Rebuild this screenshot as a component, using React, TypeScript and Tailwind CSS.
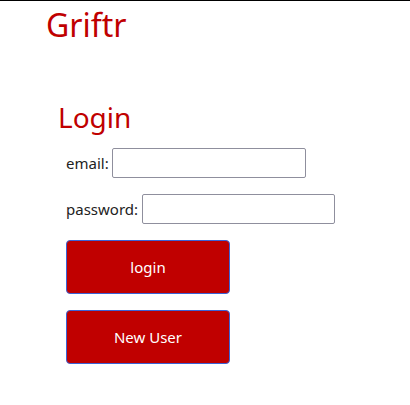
import React from "react";

export default function App() {
  return (
    <div className="w-[410px] h-[405px] bg-white border-t border-black" style={{ fontFamily: '"Noto Sans", "Open Sans", sans-serif' }}>
      <h1 className="ml-[46px] mt-[2px] text-[32px] leading-[44px] text-[#c00000]">Griftr</h1>
      <div className="ml-[58px] mt-[50px]">
        <h2 className="text-[28px] leading-[40px] text-[#c00000]">Login</h2>
        <div className="ml-[8px] mt-[11px] flex flex-col">
          <div className="flex items-center text-[15px] text-[#222]">
            <span>email:</span>
            <input className="ml-[3px] w-[194px] h-[30px] border border-[#8f8f9d] rounded-[2px] outline-none" />
          </div>
          <div className="flex items-center text-[15px] text-[#222] mt-[16px]">
            <span>password:</span>
            <input type="password" className="ml-[4px] w-[193px] h-[30px] border border-[#8f8f9d] rounded-[2px] outline-none" />
          </div>
          <button className="mt-[16px] w-[164px] h-[54px] bg-[#c00000] text-white text-[15px] border border-[#3b63d6] rounded-[4px]">login</button>
          <button className="mt-[16px] w-[164px] h-[54px] bg-[#c00000] text-white text-[15px] border border-[#3b63d6] rounded-[4px]">New User</button>
        </div>
      </div>
    </div>
  );
}
